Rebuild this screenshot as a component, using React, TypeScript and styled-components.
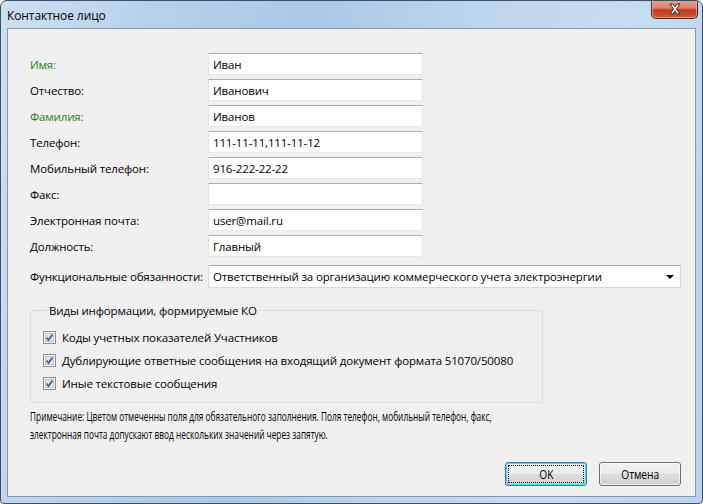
import React from 'react'
import styled, { createGlobalStyle } from 'styled-components'

const GlobalStyle = createGlobalStyle`
  html, body {
    margin: 0;
    padding: 0;
    background: #ffffff;
  }
  body {
    font-family: 'Open Sans', 'Noto Sans', sans-serif;
    font-size: 11.5px;
    letter-spacing: -0.15px;
    color: #000;
  }
`

interface Field {
  label: string
  value: string
  required?: boolean
}

const fields: Field[] = [
  { label: 'Имя:', value: 'Иван', required: true },
  { label: 'Отчество:', value: 'Иванович' },
  { label: 'Фамилия:', value: 'Иванов', required: true },
  { label: 'Телефон:', value: '111-11-11,111-11-12' },
  { label: 'Мобильный телефон:', value: '916-222-22-22' },
  { label: 'Факс:', value: '' },
  { label: 'Электронная почта:', value: 'user@mail.ru' },
  { label: 'Должность:', value: 'Главный' },
]

const infoKinds = [
  'Коды учетных показателей Участников',
  'Дублирующие ответные сообщения на входящий документ формата 51070/50080',
  'Иные текстовые сообщения',
]

const noteLines = [
  'Примечание: Цветом отмеченны поля для обязательного заполнения. Поля телефон, мобильный телефон, факс,',
  'электронная почта допускают ввод нескольких значений через запятую.',
]

const CheckMark = () => (
  <svg width="13" height="13" viewBox="0 0 13 13">
    <rect x="0.5" y="0.5" width="12" height="12" fill="#f4f4f4" stroke="#8e8f8f" />
    <rect x="2.5" y="2.5" width="8" height="8" fill="#e2e5ea" stroke="#bfc4cc" />
    <path d="M3.5 6.5 L5.5 9 L9.5 3.5" fill="none" stroke="#4a5f97" strokeWidth="1.8" />
  </svg>
)

const CloseGlyph = () => (
  <svg width="14" height="12" viewBox="0 0 14 12">
    <path
      d="M2 1 L5 1 L7 4 L9 1 L12 1 L8.5 6 L12 11 L9 11 L7 8 L5 11 L2 11 L5.5 6 Z"
      fill="#ffffff"
      stroke="#4b1a14"
      strokeWidth="1"
      strokeLinejoin="round"
    />
  </svg>
)

export default function App() {
  return (
    <>
      <GlobalStyle />
      <Frame>
        <TitleBar>
          <Title>Контактное лицо</Title>
          <CloseButton>
            <CloseGlyph />
          </CloseButton>
        </TitleBar>
        <Client>
          <FormGrid>
            {fields.map(field => (
              <React.Fragment key={field.label}>
                <Label required={field.required}>{field.label}</Label>
                <TextBox>{field.value}</TextBox>
              </React.Fragment>
            ))}
          </FormGrid>
          <SelectRow>
            <Label>Функциональные обязанности:</Label>
            <Select>
              <span>Ответственный за организацию коммерческого учета электроэнергии</span>
              <Arrow />
            </Select>
          </SelectRow>
          <GroupBox>
            <Legend>Виды информации, формируемые КО</Legend>
            {infoKinds.map(kind => (
              <CheckRow key={kind}>
                <CheckMark />
                <span>{kind}</span>
              </CheckRow>
            ))}
          </GroupBox>
          <Note>
            {noteLines.map(line => (
              <NoteLine key={line}>{line}</NoteLine>
            ))}
          </Note>
          <ButtonBar>
            <Button isDefault>
              <ButtonText>OK</ButtonText>
            </Button>
            <Button>
              <ButtonText>Отмена</ButtonText>
            </Button>
          </ButtonBar>
        </Client>
      </Frame>
    </>
  )
}

const Frame = styled.div`
  box-sizing: border-box;
  width: 703px;
  height: 504px;
  display: flex;
  flex-direction: column;
  border: 1px solid #3f4f63;
  border-radius: 7px 7px 4px 4px;
  padding: 0 6px 6px;
  background: linear-gradient(
    100deg,
    #cde0f2 0%,
    #b6d0ec 20%,
    #a9c7e8 40%,
    #bcd5ee 60%,
    #c6dcf1 80%,
    #b9d3ee 100%
  );
  overflow: hidden;
`

const TitleBar = styled.div`
  position: relative;
  height: 27px;
  display: flex;
  align-items: center;
`

const Title = styled.div`
  font-size: 12px;
  letter-spacing: -0.1px;
  margin-top: 1px;
  color: #000;
`

const CloseButton = styled.div`
  position: absolute;
  top: -1px;
  right: -2px;
  width: 47px;
  height: 19px;
  box-sizing: border-box;
  border: 1px solid #4a2520;
  border-top: none;
  border-radius: 0 0 5px 5px;
  background: linear-gradient(#e3a797 0%, #d6826c 45%, #c2391f 55%, #cf5a3c 100%);
  box-shadow: inset 0 0 0 1px rgba(255, 210, 200, 0.5);
  display: flex;
  align-items: center;
  justify-content: center;
`

const Client = styled.div`
  flex: 1;
  display: flex;
  flex-direction: column;
  background: #f0f0f0;
  border: 1px solid #8796aa;
  padding: 24px 14px 10px 22px;
`

const FormGrid = styled.div`
  display: grid;
  grid-template-columns: 178px 215px;
  grid-auto-rows: 22px;
  row-gap: 4px;
  align-items: center;
`

const Label = styled.div<{ required?: boolean }>`
  color: ${props => (props.required ? '#23801a' : '#000')};
  white-space: nowrap;
`

const TextBox = styled.div`
  box-sizing: border-box;
  height: 22px;
  background: #fff;
  border: 1px solid #e2e3ea;
  border-top-color: #abadb3;
  border-bottom-color: #e3e9ef;
  padding: 0 4px;
  display: flex;
  align-items: center;
  white-space: nowrap;
`

const SelectRow = styled.div`
  display: grid;
  grid-template-columns: 178px 473px;
  align-items: center;
  margin-top: 8px;
`

const Select = styled(TextBox)`
  height: 23px;
  justify-content: space-between;
  border-color: #dadada;
  border-top-color: #acacac;
  padding-right: 6px;
`

const Arrow = styled.div`
  width: 0;
  height: 0;
  border-left: 4px solid transparent;
  border-right: 4px solid transparent;
  border-top: 4px solid #000;
  margin-top: 1px;
`

const GroupBox = styled.fieldset`
  width: 513px;
  box-sizing: border-box;
  height: 100px;
  margin: 15px 0 0 0;
  padding: 12px 0 0 12px;
  border: 1px solid #d5dfe5;
  border-radius: 3px;
  display: flex;
  flex-direction: column;
  gap: 9px;
`

const Legend = styled.legend`
  padding: 0 1px;
  margin-left: 5px;
  color: #000;
`

const CheckRow = styled.div`
  display: flex;
  align-items: center;
  gap: 6px;
  height: 14px;
  white-space: nowrap;
  svg {
    flex-shrink: 0;
  }
`

const Note = styled.div`
  margin-top: 5px;
  font-size: 12.5px;
  letter-spacing: 0;
  line-height: 18px;
`

const NoteLine = styled.div`
  white-space: nowrap;
  width: 700px;
  transform: scaleX(0.665);
  transform-origin: left center;
`

const ButtonBar = styled.div`
  margin-top: auto;
  display: flex;
  justify-content: flex-end;
  gap: 12px;
`

const Button = styled.div<{ isDefault?: boolean }>`
  box-sizing: border-box;
  width: 82px;
  height: 24px;
  display: flex;
  align-items: center;
  justify-content: center;
  border: 1px solid ${props => (props.isDefault ? '#3c7fb1' : '#707070')};
  border-radius: 3px;
  background: linear-gradient(#f2f2f2 0%, #ebebeb 48%, #dddddd 52%, #cfcfcf 100%);
  box-shadow: inset 0 0 0 1px ${props => (props.isDefault ? '#48d8fb' : 'rgba(255,255,255,0.7)')};
  outline: ${props => (props.isDefault ? '1px dotted #000' : 'none')};
  outline-offset: -4px;
`

const ButtonText = styled.span`
  display: inline-block;
  font-size: 13.5px;
  letter-spacing: 0;
  transform: scaleX(0.75);
`
